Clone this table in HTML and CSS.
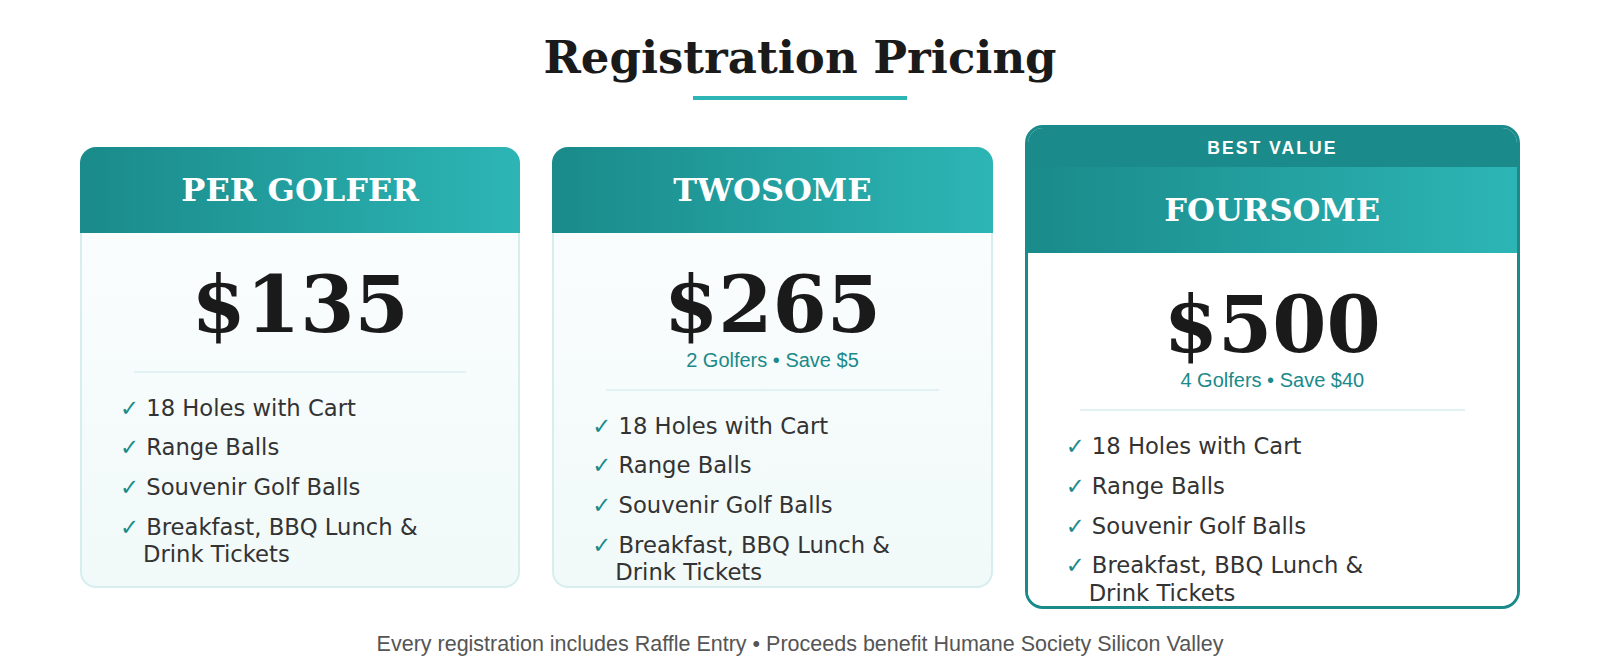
FILE: index.html
```html
<!DOCTYPE html>
<html lang="en">
<head>
<meta charset="utf-8">
<title>Registration Pricing</title>
<link rel="stylesheet" href="styles.css">
</head>
<body>
<main class="page">
  <h1 class="title">Registration Pricing</h1>
  <div class="title-rule"></div>

  <div class="plans">
    <section class="card">
      <header class="card-head"><h2 class="plan-name">PER GOLFER</h2></header>
      <div class="card-body">
        <div class="price">$135</div>
        <div class="divider"></div>
        <ul class="features">
          <li><span class="check">✓</span> 18 Holes with Cart</li>
          <li><span class="check">✓</span> Range Balls</li>
          <li><span class="check">✓</span> Souvenir Golf Balls</li>
          <li><span class="check">✓</span> Breakfast, BBQ Lunch &amp;<br>Drink Tickets</li>
        </ul>
      </div>
    </section>

    <section class="card">
      <header class="card-head"><h2 class="plan-name">TWOSOME</h2></header>
      <div class="card-body">
        <div class="price">$265</div>
        <div class="savings">2 Golfers • Save $5</div>
        <div class="divider"></div>
        <ul class="features">
          <li><span class="check">✓</span> 18 Holes with Cart</li>
          <li><span class="check">✓</span> Range Balls</li>
          <li><span class="check">✓</span> Souvenir Golf Balls</li>
          <li><span class="check">✓</span> Breakfast, BBQ Lunch &amp;<br>Drink Tickets</li>
        </ul>
      </div>
    </section>

    <section class="card card--featured">
      <div class="badge">BEST VALUE</div>
      <header class="card-head"><h2 class="plan-name">FOURSOME</h2></header>
      <div class="card-body">
        <div class="price">$500</div>
        <div class="savings">4 Golfers • Save $40</div>
        <div class="divider"></div>
        <ul class="features">
          <li><span class="check">✓</span> 18 Holes with Cart</li>
          <li><span class="check">✓</span> Range Balls</li>
          <li><span class="check">✓</span> Souvenir Golf Balls</li>
          <li><span class="check">✓</span> Breakfast, BBQ Lunch &amp;<br>Drink Tickets</li>
        </ul>
      </div>
    </section>
  </div>

  <p class="note">Every registration includes Raffle Entry • Proceeds benefit Humane Society Silicon Valley</p>
</main>
</body>
</html>
```

FILE: styles.css
```css
* { box-sizing: border-box; }

html, body {
  margin: 0;
  padding: 0;
  background: #ffffff;
}

body {
  font-family: "DejaVu Sans", sans-serif;
  color: #333333;
}

.page {
  padding-top: 31px;
  display: flex;
  flex-direction: column;
  align-items: center;
}

.title {
  margin: 0;
  font-family: "DejaVu Serif", serif;
  font-weight: bold;
  font-size: 45px;
  line-height: normal;
  color: #1a1a1a;
  text-align: center;
}

.title-rule {
  width: 214px;
  height: 4px;
  margin-top: 12px;
  background: #2db5b5;
}

.plans {
  width: 1440px;
  margin-top: 25px;
  display: grid;
  grid-template-columns: 1fr 1fr 1.125fr;
  column-gap: 32px;
  align-items: center;
}

.card {
  height: 441px;
  display: flex;
  flex-direction: column;
}

.card-head {
  flex: none;
  background: linear-gradient(90deg, #1a8a8a 0%, #2db5b5 100%);
  border-radius: 16px 16px 0 0;
  padding: 24px 20px;
  text-align: center;
}

.plan-name {
  margin: 0;
  font-family: "DejaVu Serif", serif;
  font-weight: bold;
  font-size: 32px;
  line-height: 38px;
  color: #ffffff;
}

.card-body {
  flex: 1;
  min-height: 0;
  padding: 24px 40px 0;
  border: 2px solid #d6eeee;
  border-top: 0;
  border-radius: 0 0 16px 16px;
  background: linear-gradient(180deg, #fafdfd 0%, #f1f9f9 100%);
}

.price {
  font-family: "DejaVu Serif", serif;
  font-weight: bold;
  font-size: 78px;
  line-height: 96px;
  color: #1a1a1a;
  text-align: center;
}

.savings {
  margin: -4px 0 3px;
  font-family: "Liberation Sans", Arial, sans-serif;
  font-size: 20px;
  line-height: 22px;
  color: #1a8a8a;
  text-align: center;
}

.divider {
  height: 2px;
  margin: 18px 12px 22px;
  background: #e2f1f1;
}

.features {
  list-style: none;
  margin: 0;
  padding: 0;
}

.features li {
  font-size: 22.7px;
  line-height: 27.5px;
  margin-bottom: 12.3px;
  padding-left: 21px;
  text-indent: -23px;
  color: #333333;
}

.features li:last-child { margin-bottom: 0; }

.check {
  color: #1a8a8a;
  font-size: 22.7px;
}

.card--featured {
  height: 484px;
  border: 3px solid #1a8a8a;
  border-radius: 18px;
  overflow: hidden;
  background: #ffffff;
}

.card--featured .card-head {
  border-radius: 0;
}

.card--featured .card-body {
  border: 0;
  border-radius: 0;
  background: #ffffff;
}

.badge {
  flex: none;
  background: #1a8a8a;
  color: #ffffff;
  font-family: "Liberation Sans", Arial, sans-serif;
  font-weight: bold;
  font-size: 17.6px;
  line-height: 21px;
  letter-spacing: 2px;
  text-align: center;
  padding: 10px 0 8px;
}

.note {
  margin: 23px 0 0;
  font-family: "Liberation Sans", Arial, sans-serif;
  font-size: 21.5px;
  line-height: normal;
  color: #555555;
  text-align: center;
}
```
